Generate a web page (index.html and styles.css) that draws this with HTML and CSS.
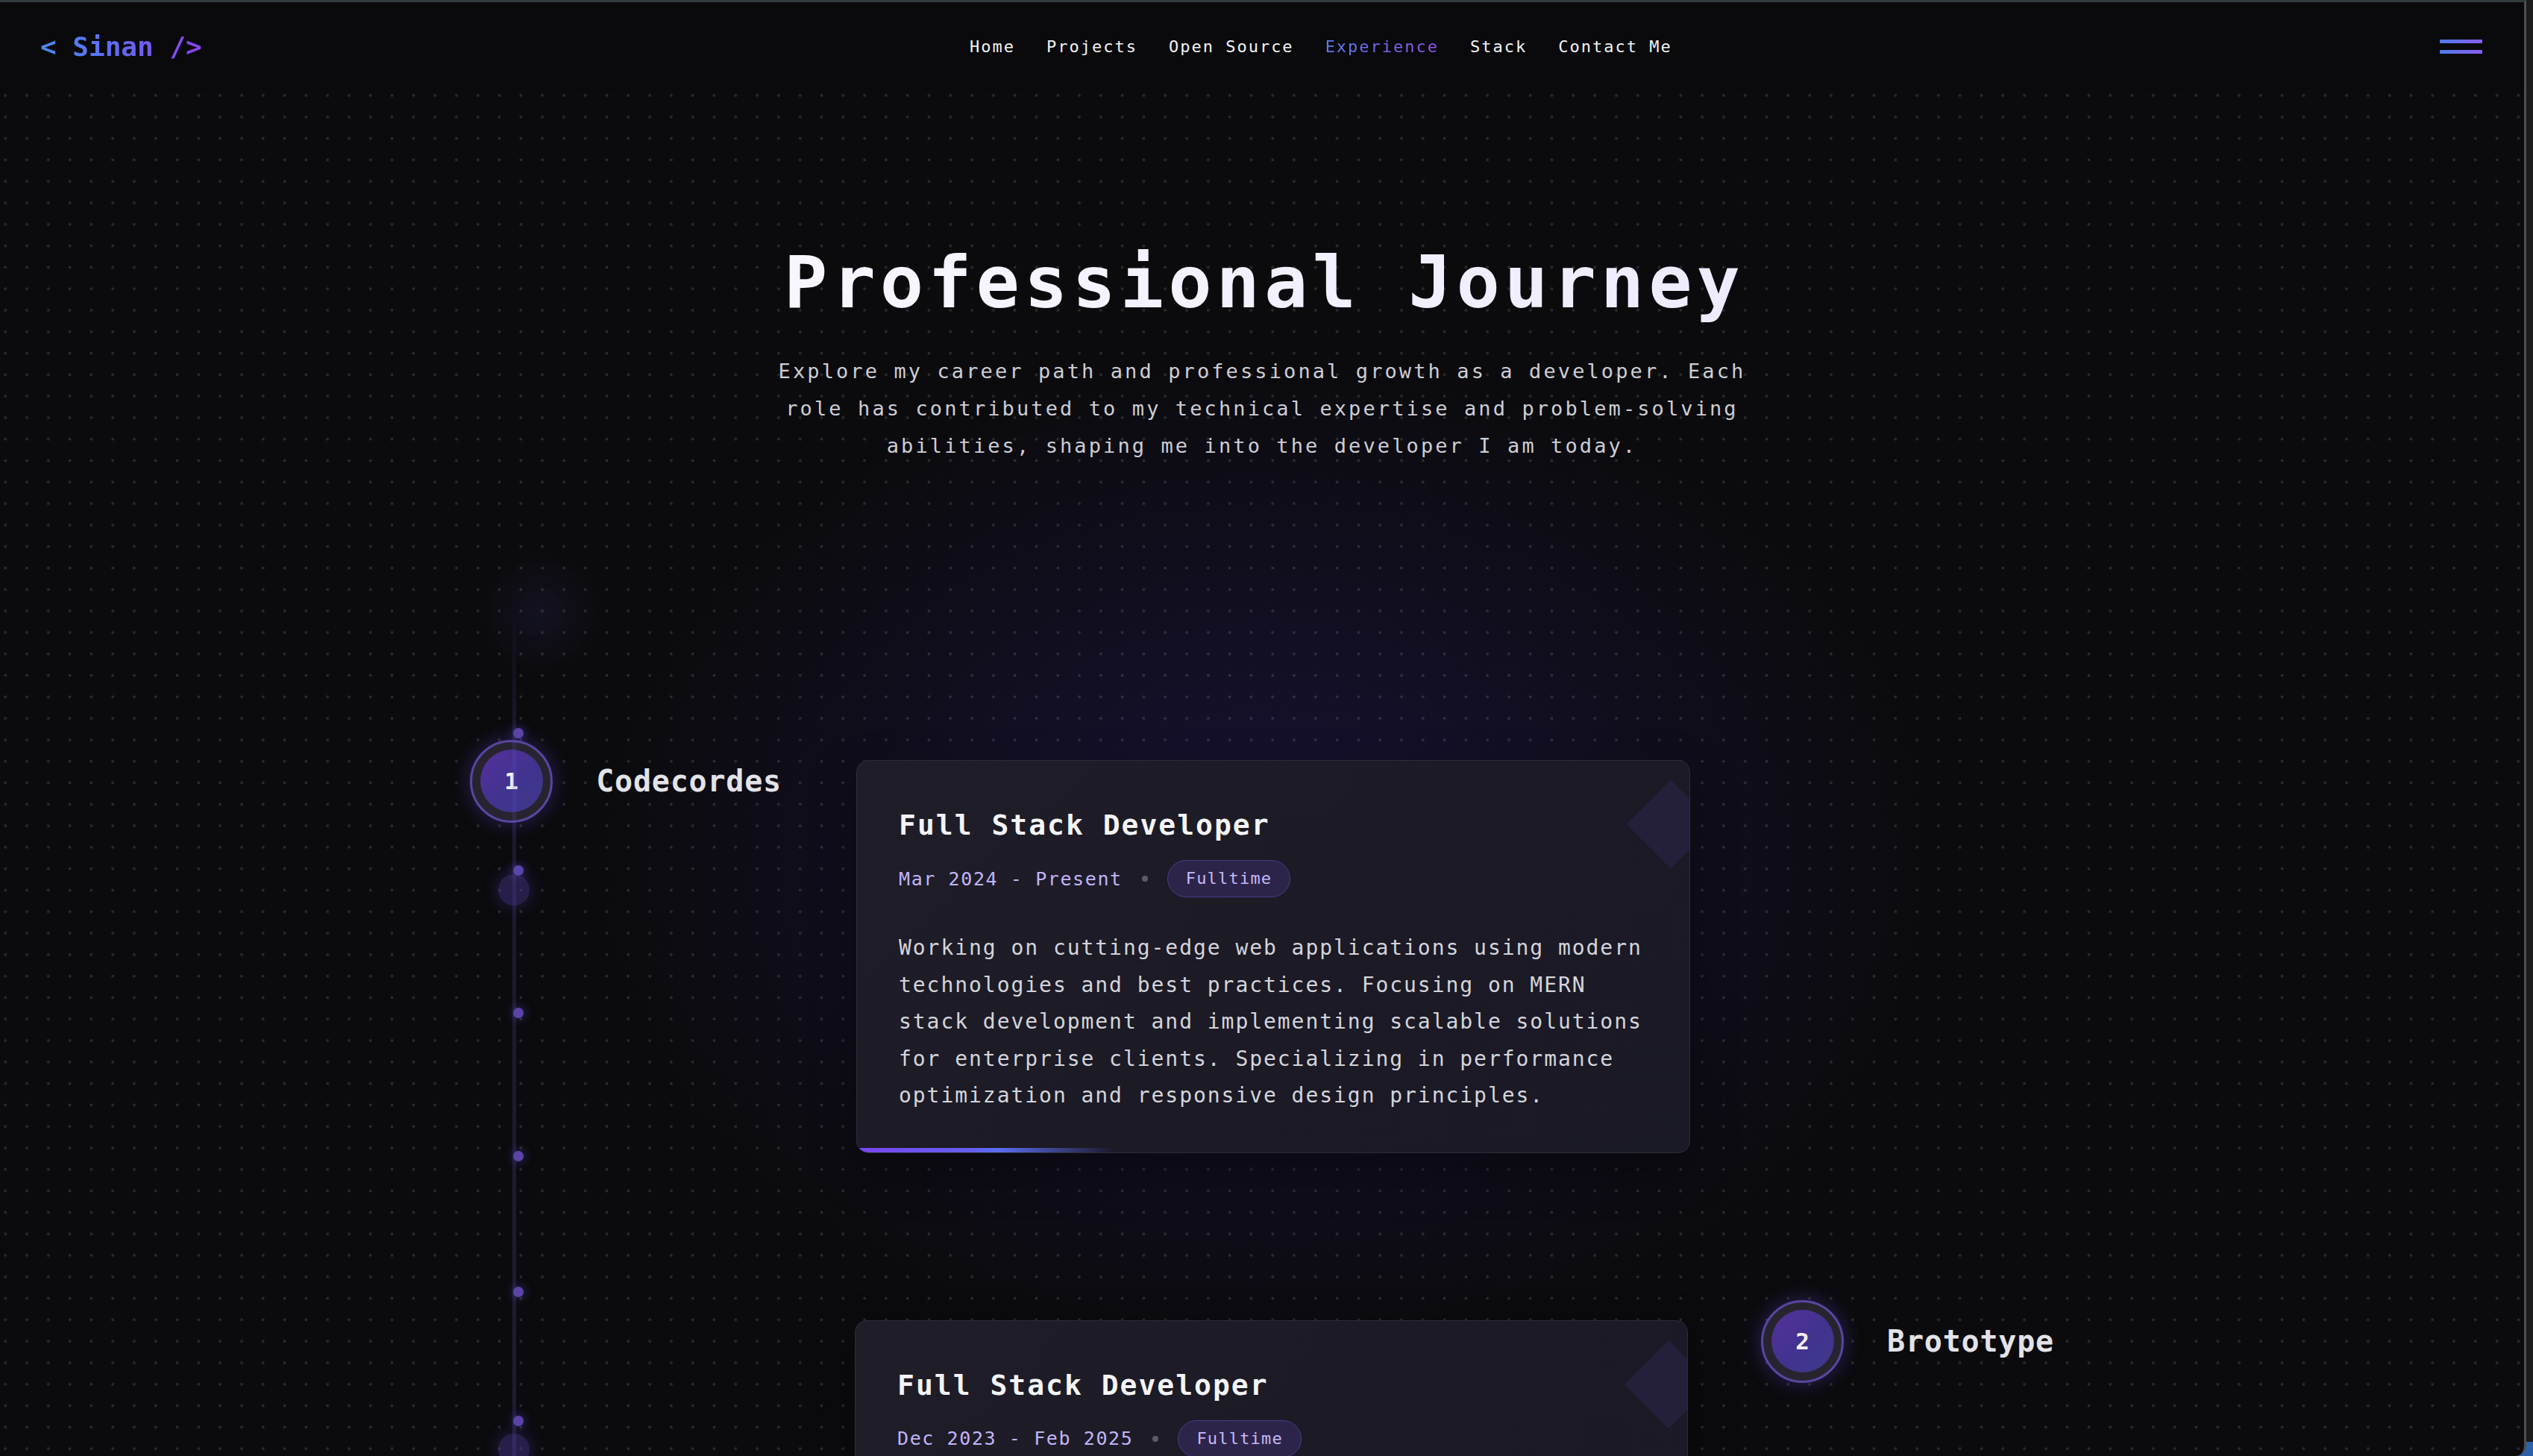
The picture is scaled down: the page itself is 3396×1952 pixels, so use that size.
FILE: index.html
```html
<!DOCTYPE html>
<html lang="en">
<head>
<meta charset="utf-8">
<title>Sinan — Experience</title>
<link rel="stylesheet" href="styles.css">
</head>
<body>
<div class="window">
  <header class="header">
    <a class="logo" href="#">&lt; Sinan /&gt;</a>
    <nav class="nav">
      <a href="#">Home</a>
      <a href="#">Projects</a>
      <a href="#">Open Source</a>
      <a href="#" class="active">Experience</a>
      <a href="#">Stack</a>
      <a href="#">Contact Me</a>
    </nav>
    <button class="burger" aria-label="Menu"><span></span><span></span></button>
  </header>

  <section class="hero">
    <h1 class="title">Professional Journey</h1>
    <p class="subtitle">Explore my career path and professional growth as a developer. Each role has contributed to my technical expertise and problem-solving abilities, shaping me into the developer I am today.</p>
  </section>

  <section class="timeline">
    <div class="line"></div>
    <span class="spark" style="top:176px"></span>
    <span class="spark" style="top:360px"></span>
    <span class="pulse" style="top:372px"></span>
    <span class="spark" style="top:551px"></span>
    <span class="spark" style="top:743px"></span>
    <span class="spark" style="top:925px"></span>
    <span class="spark" style="top:1098px"></span>
    <span class="pulse" style="top:1122px"></span>

    <div class="row">
      <div class="side side-left">
        <div class="node"><span class="node-inner">1</span></div>
        <h3 class="company">Codecordes</h3>
      </div>
      <article class="card">
        <span class="diamond"></span>
        <h2 class="role">Full Stack Developer</h2>
        <div class="meta">
          <span class="date">Mar 2024 - Present</span>
          <span class="sep"></span>
          <span class="badge">Fulltime</span>
        </div>
        <p class="desc">Working on cutting-edge web applications using modern technologies and best practices. Focusing on MERN stack development and implementing scalable solutions for enterprise clients. Specializing in performance optimization and responsive design principles.</p>
        <span class="progress"></span>
      </article>
      <div class="side"></div>
    </div>

    <div class="row row-alt">
      <div class="side"></div>
      <article class="card">
        <span class="diamond"></span>
        <h2 class="role">Full Stack Developer</h2>
        <div class="meta">
          <span class="date">Dec 2023 - Feb 2025</span>
          <span class="sep"></span>
          <span class="badge">Fulltime</span>
        </div>
        <p class="desc">Built full stack web applications with the MERN stack, working on real-world projects and collaborating in agile teams.</p>
        <span class="progress"></span>
      </article>
      <div class="side side-right">
        <div class="node"><span class="node-inner">2</span></div>
        <h3 class="company">Brototype</h3>
      </div>
    </div>
  </section>
</div>
</body>
</html>
```
FILE: styles.css
```css
* { box-sizing: border-box; }
html, body { margin: 0; padding: 0; }
body {
  height: 1952px;
  overflow: hidden;
  font-family: "DejaVu Sans Mono", "Liberation Mono", monospace;
  background: linear-gradient(to bottom, #1c1c1d 0, #1c1c1d 1933px, #2c60ab 1933px);
}
.window {
  position: relative;
  width: 3387px;
  height: 1952px;
  overflow: hidden;
  border-top: 3px solid #313b3e;
  border-right: 3px solid #4e4e50;
  border-bottom-right-radius: 14px;
  background-color: #0b0b0e;
  background-image:
    radial-gradient(circle at center, rgba(255,255,255,0.13) 0, rgba(255,255,255,0.13) 1.6px, rgba(255,255,255,0) 2.3px),
    radial-gradient(circle 80px at 725px 818px, rgba(70,60,150,0.14), rgba(70,60,150,0)),
    radial-gradient(ellipse 1150px 850px at 1700px 1150px, rgba(48,32,125,0.34), rgba(48,32,125,0) 78%);
  background-size: 28.8px 28.8px, auto, auto;
  background-position: 21.6px 24.2px, 0 0, 0 0;
  background-repeat: repeat, no-repeat, no-repeat;
}

/* header */
.header {
  height: 118px;
  display: flex;
  align-items: center;
  justify-content: space-between;
  padding: 0 56px 0 54px;
  background: #0a0a0d;
}
.logo {
  font-size: 36px;
  font-weight: bold;
  text-decoration: none;
  background: linear-gradient(90deg, #4a8cf0 0%, #5f6cf2 45%, #7a55ee 75%, #8c3ff0 100%);
  -webkit-background-clip: text;
  background-clip: text;
  color: transparent;
}
.nav {
  display: flex;
  gap: 42px;
}
.nav a {
  font-size: 22px;
  letter-spacing: 2px;
  color: #f2f2f4;
  text-decoration: none;
}
.nav a.active {
  background: linear-gradient(90deg, #5a7ef0, #8e55ee);
  -webkit-background-clip: text;
  background-clip: text;
  color: transparent;
}
.burger {
  width: 57px;
  height: 19px;
  padding: 0;
  border: 0;
  background: none;
  display: flex;
  flex-direction: column;
  justify-content: space-between;
}
.burger span {
  display: block;
  height: 5px;
  width: 57px;
  border-radius: 1px;
  background: linear-gradient(90deg, #4f7cec, #8a5cf0);
}

/* hero */
.hero {
  padding-top: 205px;
  text-align: center;
}
.title {
  margin: 0;
  padding-left: 6px;
  font-size: 97px;
  line-height: 1.1;
  letter-spacing: 6px;
  font-weight: bold;
  background: linear-gradient(90deg, #ffffff 0%, #f3f1ff 50%, #e6e1ff 100%);
  -webkit-background-clip: text;
  background-clip: text;
  color: transparent;
}
.subtitle {
  margin: 40px auto 0;
  max-width: 1340px;
  font-size: 27px;
  line-height: 50px;
  letter-spacing: 3.1px;
  color: #cdcdd5;
}

/* timeline */
.timeline {
  position: relative;
  margin-top: 177px;
  padding: 192px 0 0 30px;
}
.line {
  position: absolute;
  left: 687px;
  top: 20px;
  bottom: -400px;
  width: 5px;
  background: linear-gradient(to bottom, rgba(95,75,190,0) 0, rgba(95,75,190,0.2) 160px, rgba(95,75,190,0.26) 100%);
}
.spark {
  position: absolute;
  left: 688px;
  width: 14px;
  height: 14px;
  border-radius: 50%;
  background: #5a45a6;
  box-shadow: 0 0 14px rgba(110, 80, 230, 0.55);
}
.pulse {
  position: absolute;
  left: 668px;
  width: 42px;
  height: 42px;
  border-radius: 50%;
  background: rgba(88, 66, 170, 0.38);
  box-shadow: 0 0 22px rgba(110, 80, 230, 0.3);
}
.row {
  display: grid;
  grid-template-columns: 1fr 1118px 1fr;
  column-gap: 100px;
  align-items: start;
}
.row + .row { margin-top: 197px; }
.side {
  display: flex;
  align-items: center;
  gap: 58px;
}
.side-left { justify-content: flex-end; }
.side-right { margin-left: -5px; }
.node {
  flex: none;
  width: 111px;
  height: 111px;
  border-radius: 50%;
  border: 3px solid #5a45a2;
  background: #28242f;
  display: flex;
  align-items: center;
  justify-content: center;
  box-shadow: 0 0 26px rgba(120, 80, 255, 0.32);
}
.node-inner {
  width: 84px;
  height: 84px;
  border-radius: 50%;
  background: linear-gradient(135deg, #55309c 0%, #41338f 55%, #3c3a8a 100%);
  color: #f4f2ff;
  font-size: 31px;
  font-weight: bold;
  display: flex;
  align-items: center;
  justify-content: center;
}
.company {
  margin: 0;
  font-size: 40px;
  font-weight: bold;
  letter-spacing: 0.8px;
  color: #e3e3e7;
}

.card {
  position: relative;
  overflow: hidden;
  margin-top: 27px;
  padding: 62px 56px 51px;
  border: 1px solid #2d2c38;
  border-radius: 16px;
  background: linear-gradient(135deg, #1f1e28 0%, #1b1a25 55%, #1a1926 100%);
  box-shadow: 0 24px 60px rgba(0, 0, 0, 0.35);
}
.row-alt .card { margin-left: -2px; margin-right: 3px; }
.diamond {
  position: absolute;
  right: -17px;
  top: 43px;
  width: 84px;
  height: 84px;
  transform: rotate(45deg);
  background: rgba(100, 75, 200, 0.13);
}
.role {
  margin: 0;
  font-size: 38px;
  line-height: 1.3;
  letter-spacing: 2px;
  font-weight: bold;
  color: #f4f4f6;
}
.meta {
  display: flex;
  align-items: center;
  gap: 26px;
  margin-top: 22px;
  height: 50px;
}
.date {
  font-size: 25px;
  letter-spacing: 1.6px;
  color: #c2b4f8;
}
.sep {
  width: 8px;
  height: 8px;
  border-radius: 50%;
  background: #5c5a68;
}
.badge {
  height: 50px;
  padding: 0 24px;
  line-height: 48px;
  border-radius: 25px;
  border: 1px solid #4a3a88;
  background: #2d2549;
  color: #c6b8fb;
  font-size: 22px;
  letter-spacing: 1.2px;
}
.desc {
  margin: 43px 0 0;
  font-size: 28px;
  line-height: 49.5px;
  letter-spacing: 1.95px;
  color: #d4d4db;
}
.progress {
  position: absolute;
  left: 0;
  bottom: 0;
  width: 345px;
  height: 6px;
  background: linear-gradient(90deg, #7b45f0 0%, #6360ee 45%, #5a6cf0 55%, rgba(90, 108, 240, 0) 100%);
}
```
